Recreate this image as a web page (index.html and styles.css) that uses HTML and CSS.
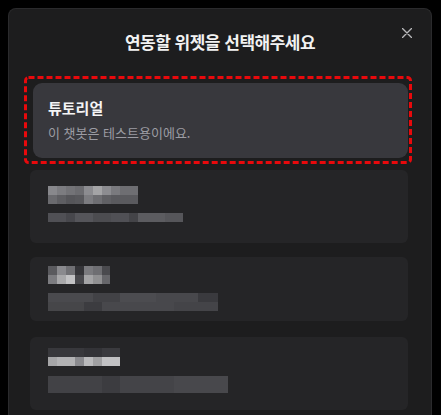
FILE: index.html
```html
<!DOCTYPE html>
<html lang="ko">
<head>
<meta charset="utf-8">
<link rel="stylesheet" href="styles.css">
</head>
<body>
<div class="modal">
  <div class="header">
    <h1 class="title">연동할 위젯을 선택해주세요</h1>
    <button class="close" aria-label="닫기">
      <svg width="10" height="10" viewBox="0 0 10 10"><path d="M0.5 0.5 L9.5 9.5 M9.5 0.5 L0.5 9.5" stroke="#b8b8ba" stroke-width="1.4" stroke-linecap="round" fill="none"/></svg>
    </button>
  </div>
  <div class="list">
    <div class="card selected">
      <div class="card-title">튜토리얼</div>
      <div class="card-desc">이 챗봇은 테스트용이에요.</div>
      <svg class="focus-ring" width="388" height="88" viewBox="0 0 388 88"><rect x="1.5" y="1.5" width="385" height="85" rx="3" fill="none" stroke="#e8090c" stroke-width="3" stroke-dasharray="6 3"/></svg>
    </div>
    <div class="card blur c2">
      <div class="mosaic m2t"></div>
      <div class="mosaic m2s"></div>
    </div>
    <div class="card blur c3">
      <div class="mosaic m3t"></div>
      <div class="mosaic m3s"></div>
    </div>
    <div class="card blur c4">
      <div class="mosaic m4t"></div>
      <div class="mosaic m4s"></div>
    </div>
  </div>
</div>
</body>
</html>
```

FILE: styles.css
```css
* { box-sizing: border-box; }
html, body { margin: 0; padding: 0; background: #000; height: 100%; overflow: hidden; }
body { font-family: "Noto Sans CJK KR", "Noto Sans", sans-serif; }

.modal {
  margin: 8px 9px 0 8px;
  height: calc(100vh - 4px);
  background: #1d1d1e;
  border: 1px solid #2a2a2c;
  border-bottom: 0;
  border-radius: 8px 8px 0 0;
  position: relative;
  overflow: hidden;
}

.header {
  position: relative;
  padding-top: 21px;
  height: 67px;
}
.title {
  margin: 0;
  text-align: center;
  font-size: 17px;
  line-height: 24px;
  font-weight: 700;
  color: #f2f2f2;
  letter-spacing: -0.5px;
}
.close {
  position: absolute;
  top: 19px;
  right: 19px;
  width: 10px;
  height: 10px;
  padding: 0;
  border: 0;
  background: transparent;
  display: flex;
}

.list {
  display: flex;
  flex-direction: column;
  padding: 7px 23px 0 21px;
}

.card {
  background: #252527;
  border-radius: 6px;
  padding-left: 18px;
  display: flex;
  flex-direction: column;
}

.card.selected {
  position: relative;
  margin-left: 3px;
  background: #38383d;
  border-radius: 9px;
  height: 75px;
  padding: 15px 15px 0 15px;
}
.focus-ring {
  position: absolute;
  left: -9px;
  top: -7px;
  pointer-events: none;
}
.card-title {
  font-size: 15px;
  line-height: 20px;
  font-weight: 700;
  color: #f4f4f5;
  margin-bottom: 6px;
}
.card-desc {
  font-size: 13px;
  line-height: 18px;
  color: #9c9ca3;
}

.c2 { margin-top: 12px; height: 73px; padding-top: 16px; }
.c3 { margin-top: 14px; height: 64px; padding-top: 9px; }
.c4 { margin-top: 16px; height: 73px; padding-top: 11px; }

.mosaic { filter: blur(0.6px); }
.m2t {
  width: 90px; height: 18px;
  background:
    linear-gradient(90deg, #88888c 0 9px, #7c7c80 9px 18px, #737377 18px 27px, #6c6c70 27px 36px, #8c8c90 36px 45px, #a4a4a6 45px 54px, #8c8c90 54px 63px, #7a7a7e 63px 72px, #6e6e72 72px 90px) top / 100% 9px no-repeat,
    linear-gradient(90deg, #6a6a6e 0 9px, #5e5e62 9px 18px, #555559 18px 27px, #58585c 27px 36px, #7c7c80 36px 45px, #6e6e72 45px 54px, #606064 54px 63px, #5a5a5e 63px 90px) bottom / 100% 9px no-repeat;
}
.m2s {
  margin-top: 9px;
  width: 135px; height: 9px;
  background: linear-gradient(90deg, #505055 0 18px, #47474c 18px 27px, #55555a 27px 45px, #4c4c50 45px 63px, #505055 63px 81px, #444448 81px 90px, #5c5c60 90px 117px, #56565a 117px 135px);
}
.m3t {
  width: 62px; height: 18px;
  background:
    linear-gradient(90deg, #5a5a5e 0 9px, #8a8a8e 9px 18px, #707074 18px 27px, #343438 27px 36px, #7a7a7e 36px 45px, #6e6e72 45px 54px, #4a4a4e 54px 62px) top / 100% 9px no-repeat,
    linear-gradient(90deg, #7c7c80 0 9px, #a8a8aa 9px 18px, #c2c2c4 18px 27px, #48484c 27px 36px, #a4a4a6 36px 45px, #909092 45px 54px, #66666a 54px 62px) bottom / 100% 9px no-repeat;
}
.m3s {
  margin-top: 9px;
  width: 170px; height: 18px;
  background:
    linear-gradient(90deg, #4a4a4e 0 45px, #424246 45px 72px, #4c4c50 72px 108px, #48484c 108px 150px, #3a3a3e 150px 170px) top / 100% 9px no-repeat,
    linear-gradient(90deg, #464649 0 36px, #3c3c40 36px 54px, #48484c 54px 126px, #444448 126px 170px) bottom / 100% 9px no-repeat;
}
.m4t {
  width: 72px; height: 18px;
  background:
    linear-gradient(90deg, #38383c 0 36px, #333337 36px 54px, #3a3a3e 54px 72px) top / 100% 9px no-repeat,
    linear-gradient(90deg, #a6a6a8 0 9px, #b2b2b4 9px 27px, #8a8a8e 27px 36px, #bababc 36px 45px, #a0a0a2 45px 54px, #c2c2c4 54px 72px) bottom / 100% 9px no-repeat;
}
.m4s {
  margin-top: 10px;
  width: 180px; height: 17px;
  background:
    linear-gradient(90deg, #424246 0 54px, #3c3c40 54px 72px, #444448 72px 126px, #48484c 126px 180px);
}
```
